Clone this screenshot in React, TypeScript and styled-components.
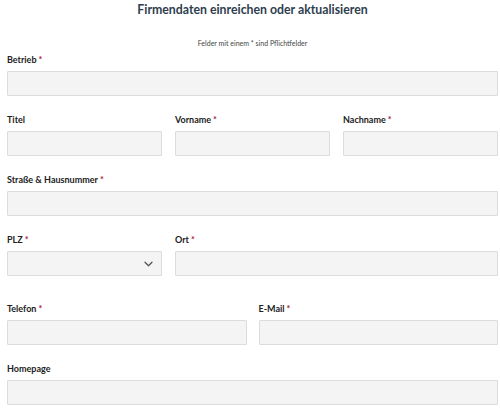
import React from 'react';
import styled, { createGlobalStyle } from 'styled-components';

const GlobalStyle = createGlobalStyle`
  html, body {
    margin: 0;
    padding: 0;
    background: #ffffff;
  }
  body {
    font-family: Lato, "Open Sans", Arial, sans-serif;
  }
`;

const Form = styled.form`
  width: 491px;
  padding: 0 2px 0 7px;
`;

const Title = styled.h2`
  margin: 0;
  padding-top: 1px;
  font-size: 12.3px;
  line-height: 18px;
  font-weight: 700;
  color: #2d3e4e;
  text-align: center;
`;

const Hint = styled.p`
  margin: 19px 0 0;
  font-size: 7px;
  line-height: 10px;
  color: #444;
  text-align: center;
`;

const Row = styled.div<{ $cols: string; $gap: number; $top: number }>`
  display: grid;
  grid-template-columns: ${(p) => p.$cols};
  column-gap: ${(p) => p.$gap}px;
  margin-top: ${(p) => p.$top}px;
`;

const Field = styled.div`
  display: flex;
  flex-direction: column;
`;

const Label = styled.label`
  font-size: 9px;
  line-height: 12px;
  font-weight: 700;
  color: #222;
  margin-bottom: 5px;
`;

const Req = styled.span`
  color: #a8223a;
  margin-left: 2px;
`;

const Input = styled.div`
  box-sizing: border-box;
  height: 25px;
  background: #f4f4f4;
  border: 1px solid #dcdcdc;
  border-radius: 1px;
`;

const Select = styled(Input)`
  display: flex;
  align-items: center;
  justify-content: flex-end;
  padding-right: 8px;
`;

const Chevron = () => (
  <svg width="9" height="6" viewBox="0 0 9 6" fill="none">
    <path d="M1 1.2l3.5 3.5 3.5-3.5" stroke="#555" strokeWidth="1.3" strokeLinecap="round" strokeLinejoin="round" />
  </svg>
);

const Box = ({ label, required, select }: { label: string; required?: boolean; select?: boolean }) => (
  <Field>
    <Label>
      {label}
      {required && <Req>*</Req>}
    </Label>
    {select ? (
      <Select>
        <Chevron />
      </Select>
    ) : (
      <Input />
    )}
  </Field>
);

export default function App() {
  return (
    <>
      <GlobalStyle />
      <Form>
        <Title>Firmendaten einreichen oder aktualisieren</Title>
        <Hint>Felder mit einem * sind Pflichtfelder</Hint>
        <Row $cols="1fr" $gap={0} $top={6}>
          <Box label="Betrieb" required />
        </Row>
        <Row $cols="1fr 1fr 1fr" $gap={13} $top={18}>
          <Box label="Titel" />
          <Box label="Vorname" required />
          <Box label="Nachname" required />
        </Row>
        <Row $cols="1fr" $gap={0} $top={18}>
          <Box label="Straße & Hausnummer" required />
        </Row>
        <Row $cols="155px 1fr" $gap={13} $top={18}>
          <Box label="PLZ" required select />
          <Box label="Ort" required />
        </Row>
        <Row $cols="1fr 1fr" $gap={12} $top={27}>
          <Box label="Telefon" required />
          <Box label="E-Mail" required />
        </Row>
        <Row $cols="1fr" $gap={0} $top={18}>
          <Box label="Homepage" />
        </Row>
      </Form>
    </>
  );
}
